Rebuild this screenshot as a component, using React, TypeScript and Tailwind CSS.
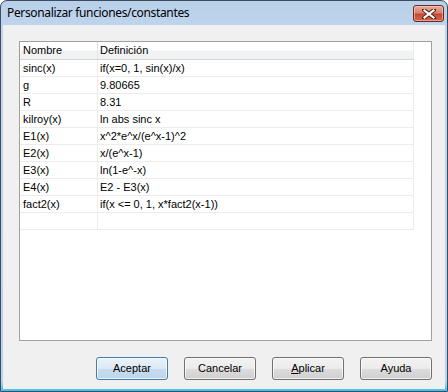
import React from "react";

const rows: [string, string][] = [
  ["sinc(x)", "if(x=0, 1, sin(x)/x)"],
  ["g", "9.80665"],
  ["R", "8.31"],
  ["kilroy(x)", "ln abs sinc x"],
  ["E1(x)", "x^2*e^x/(e^x-1)^2"],
  ["E2(x)", "x/(e^x-1)"],
  ["E3(x)", "ln(1-e^-x)"],
  ["E4(x)", "E2 - E3(x)"],
  ["fact2(x)", "if(x <= 0, 1, x*fact2(x-1))"],
  ["", ""],
];

function Btn({ children, primary }: { children: React.ReactNode; primary?: boolean }) {
  return (
    <div
      className={
        "w-[72px] h-[23px] rounded-[3px] border flex items-center justify-center text-[11px] text-black shadow-[inset_0_0_0_1px_rgba(255,255,255,0.7)] " +
        (primary
          ? "border-[#3c7fb1] bg-[linear-gradient(to_bottom,#e9f2fa_0%,#dce9f5_50%,#c9dcee_51%,#bed5ea_100%)]"
          : "border-[#707070] bg-[linear-gradient(to_bottom,#f2f2f2_0%,#ebebeb_50%,#dddddd_51%,#cfcfcf_100%)]")
      }
    >
      {children}
    </div>
  );
}

export default function App() {
  return (
    <div
      className="w-[448px] h-[392px] flex flex-col rounded-t-[7px] border border-[#3e4c60] overflow-hidden bg-[linear-gradient(to_bottom,#b9d0ea,#c2d7ee_40px,#b4d4ef_380px,#3fc0ee_390px)]"
      style={{ fontFamily: '"Liberation Sans", Arial, sans-serif' }}
    >
      <div className="h-[24px] flex items-center justify-between pl-[6px] pr-[3px] shrink-0">
        <span
          className="text-[12px] text-black leading-none tracking-[-0.35px]"
          style={{ fontFamily: '"Noto Sans", "Open Sans", sans-serif' }}
        >
          Personalizar funciones/constantes
        </span>
        <div className="w-[31px] h-[17px] mt-[1px] rounded-[3px] border border-[#6b2a22] bg-[linear-gradient(to_bottom,#e8aa9c_0%,#d9826f_45%,#c24a33_55%,#d0674e_100%)] flex items-center justify-center shadow-[inset_0_0_0_1px_rgba(255,220,210,0.5)]">
          <svg width="14" height="10" viewBox="0 0 14 10">
            <path d="M2 1 L12 9 M12 1 L2 9" stroke="#5a1e16" strokeWidth="4" strokeLinecap="square" />
            <path d="M2.5 1.5 L11.5 8.5 M11.5 1.5 L2.5 8.5" stroke="#ffffff" strokeWidth="2.2" strokeLinecap="square" />
          </svg>
        </div>
      </div>
      <div className="flex-1 mx-[2px] mb-[2px] bg-[#f0f0f0] flex flex-col">
        <div className="ml-[16px] mt-[16px] w-[413px] h-[300px] border border-[#a0a0a0] bg-white">
          <div className="w-[394px] border-r border-[#ececec] text-[11px] text-black">
            <div className="h-[18px] flex border-b border-[#d5d5d5] bg-[linear-gradient(to_bottom,#ffffff_0%,#ffffff_45%,#f1f2f4_55%,#f1f2f4_100%)]">
              <div className="w-[78px] h-full border-r border-[#e3e4e6] pl-[3px] flex items-center">Nombre</div>
              <div className="flex-1 pl-[2px] flex items-center">Definición</div>
            </div>
            {rows.map(([n, d], i) => (
              <div key={i} className="h-[17px] flex border-b border-[#ececec]">
                <div className="w-[78px] h-full border-r border-[#ececec] pl-[3px] flex items-center whitespace-pre">{n}</div>
                <div className="flex-1 pl-[2px] flex items-center whitespace-pre">{d}</div>
              </div>
            ))}
          </div>
        </div>
        <div className="flex gap-[16px] pl-[93px] mt-[16px]">
          <Btn primary>Aceptar</Btn>
          <Btn>Cancelar</Btn>
          <Btn>
            <span>
              <span className="underline">A</span>plicar
            </span>
          </Btn>
          <Btn>Ayuda</Btn>
        </div>
      </div>
    </div>
  );
}
